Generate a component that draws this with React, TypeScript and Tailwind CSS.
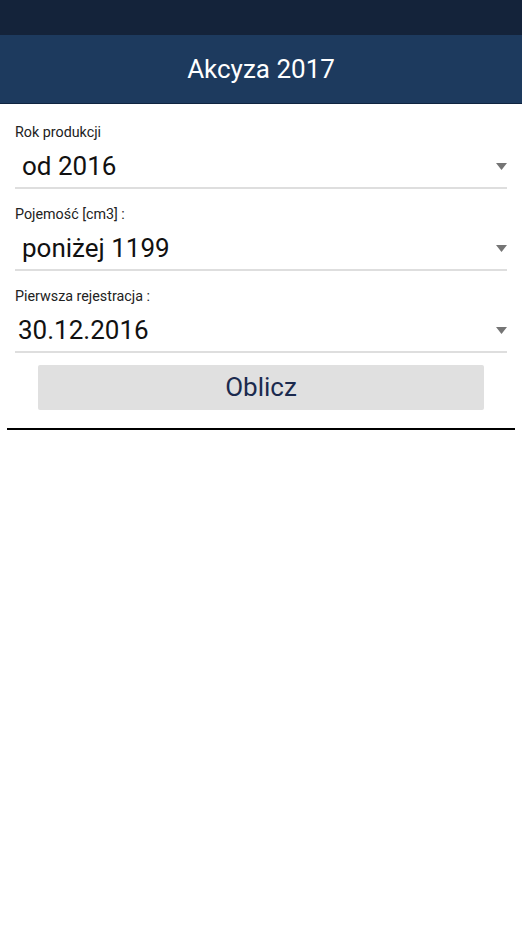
const fields = [
    { label: 'Rok produkcji', value: 'od 2016', pad: 'pl-[7px]', top: 'mt-[18px]' },
    { label: 'Pojemość [cm3] :', value: 'poniżej 1199', pad: 'pl-[7px]', top: 'mt-[15px]' },
    { label: 'Pierwsza rejestracja :', value: '30.12.2016', pad: 'pl-[3px]', top: 'mt-[15px]' },
];

const Arrow = () => (
    <svg width="11" height="7" viewBox="0 0 11 7" className="absolute right-0 top-[13px]">
        <polygon points="0,0 11,0 5.5,7" fill="#757575" />
    </svg>
);

const App = () => {
    return (
        <div
            className="w-[522px] h-[928px] bg-white flex flex-col"
            style={{ fontFamily: 'Roboto, "Noto Sans", sans-serif' }}
        >
            <div className="h-[35px] bg-[#14233a]"></div>
            <div className="h-[69px] bg-[#1d3a5e] border-b border-[#0f2440] flex items-center justify-center">
                <p className="text-white text-[26px] leading-8">Akcyza 2017</p>
            </div>

            <div className="px-[15px] flex flex-col">
                {fields.map((f) => (
                    <div key={f.label} className={f.top}>
                        <p className="text-[14.3px] leading-5 text-[#222]">{f.label}</p>
                        <div className="relative mt-[8px] pb-[5px] border-b-2 border-[#dedede]">
                            <p className={`text-[26px] leading-8 text-[#111] ${f.pad}`}>{f.value}</p>
                            <Arrow />
                        </div>
                    </div>
                ))}
            </div>

            <div className="px-[38px] mt-[12px]">
                <button className="w-full h-[45px] bg-[#e0e0e0] rounded-[2px] text-[26px] text-[#1b2a4e]">
                    Oblicz
                </button>
            </div>

            <div className="mx-[7px] mt-[18px] h-[1.5px] bg-black"></div>
        </div>
    );
};

export default App;
